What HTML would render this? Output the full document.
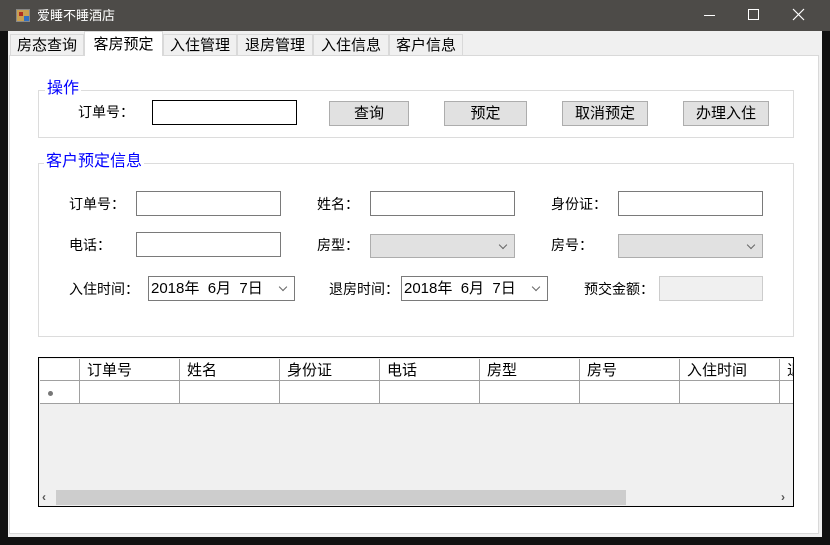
<!DOCTYPE html>
<html><head><meta charset="utf-8"><style>
*{margin:0;padding:0;box-sizing:border-box}
body{width:830px;height:545px;background:#111;position:relative;overflow:hidden;font-family:"Liberation Sans","Noto Sans CJK SC","WenQuanYi Zen Hei",sans-serif;font-size:14px;color:#000}
.a{position:absolute}
.lbl{position:absolute;font-size:14px;line-height:16px;white-space:nowrap}
.tb{position:absolute;background:#fff;border:1px solid #7a7a7a;height:25px}
.cb{position:absolute;background:#e1e1e1;border:1px solid #adadad;height:24px}
.cb:after,.dt:after{content:"";position:absolute;right:8px;top:7px;width:5px;height:5px;border-right:1px solid #666;border-bottom:1px solid #666;transform:rotate(45deg)}
.dt{position:absolute;background:#fff;border:1px solid #7a7a7a;height:25px;font-size:15px;line-height:24px;padding-left:2px}
.btn{position:absolute;background:#e1e1e1;border:1px solid #adadad;height:25px;text-align:center;font-size:15px;line-height:24px}
.grp{position:absolute;border:1px solid #dcdcdc}
.leg{position:absolute;background:#fff;color:#0000ff;font-size:16px;line-height:18px;padding:0 2px}
.tab{position:absolute;top:34px;height:22px;border:1px solid #d9d9d9;background:#f0f0f0;font-size:15px;line-height:22px;text-align:center}
.th{position:absolute;top:359px;height:22px;border-right:1px solid #a0a0a0;border-bottom:1px solid #a0a0a0;background:#fff;font-size:15px;line-height:23px;padding-left:7px;overflow:hidden;white-space:nowrap}
.td{position:absolute;top:381px;height:23px;border-right:1px solid #a0a0a0;border-bottom:1px solid #a0a0a0;background:#fff}
</style></head><body>
<div class="a" style="left:0;top:0;width:830px;height:31px;background:#4d4b48"></div>
<div class="a" style="left:16px;top:9px;width:14px;height:13px;background:#c9a050;border:1px solid #888"></div>
<div class="a" style="left:19px;top:12px;width:4px;height:4px;background:#b03020"></div>
<div class="a" style="left:24px;top:16px;width:5px;height:5px;background:#3070c0"></div>
<div class="lbl" style="left:37px;top:8px;color:#fff;font-size:13px">爱睡不睡酒店</div>
<div class="a" style="left:704px;top:15px;width:11px;height:1px;background:#fff"></div>
<div class="a" style="left:748px;top:9px;width:11px;height:11px;border:1px solid #fff"></div>
<svg class="a" style="left:792px;top:8px" width="13" height="13"><path d="M1 1L12 12M12 1L1 12" stroke="#fff" stroke-width="1.2"/></svg>
<div class="a" style="left:8px;top:31px;width:814px;height:506px;background:#f0f0f0"></div>
<div class="a" style="left:9px;top:55px;width:810px;height:479px;background:#fff;border:1px solid #d9d9d9"></div>
<div class="tab" style="left:10px;width:74px">房态查询</div>
<div class="tab" style="left:84px;top:31px;height:25px;width:79px;background:#fff;border-bottom:none;line-height:25px">客房预定</div>
<div class="tab" style="left:163px;width:74px">入住管理</div>
<div class="tab" style="left:237px;width:76px">退房管理</div>
<div class="tab" style="left:313px;width:76px">入住信息</div>
<div class="tab" style="left:389px;width:74px">客户信息</div>

<div class="grp" style="left:38px;top:90px;width:756px;height:48px"></div>
<div class="leg" style="left:45px;top:80px">操作</div>
<div class="lbl" style="left:78px;top:104px">订单号：</div>
<div class="tb" style="left:152px;top:100px;width:145px;border-color:#000"></div>
<div class="btn" style="left:329px;top:101px;width:80px">查询</div>
<div class="btn" style="left:444px;top:101px;width:83px">预定</div>
<div class="btn" style="left:562px;top:101px;width:86px">取消预定</div>
<div class="btn" style="left:683px;top:101px;width:86px">办理入住</div>

<div class="grp" style="left:38px;top:163px;width:756px;height:174px"></div>
<div class="leg" style="left:44px;top:153px">客户预定信息</div>
<div class="lbl" style="left:69px;top:196px">订单号：</div>
<div class="tb" style="left:136px;top:191px;width:145px"></div>
<div class="lbl" style="left:317px;top:196px">姓名：</div>
<div class="tb" style="left:370px;top:191px;width:145px"></div>
<div class="lbl" style="left:551px;top:196px">身份证：</div>
<div class="tb" style="left:618px;top:191px;width:145px"></div>
<div class="lbl" style="left:69px;top:237px">电话：</div>
<div class="tb" style="left:136px;top:232px;width:145px"></div>
<div class="lbl" style="left:317px;top:237px">房型：</div>
<div class="cb" style="left:370px;top:234px;width:145px"></div>
<div class="lbl" style="left:551px;top:237px">房号：</div>
<div class="cb" style="left:618px;top:234px;width:145px"></div>
<div class="lbl" style="left:69px;top:281px">入住时间：</div>
<div class="dt" style="left:148px;top:276px;width:147px">2018年&nbsp; 6月&nbsp; 7日</div>
<div class="lbl" style="left:329px;top:281px">退房时间：</div>
<div class="dt" style="left:401px;top:276px;width:147px">2018年&nbsp; 6月&nbsp; 7日</div>
<div class="lbl" style="left:584px;top:281px">预交金额：</div>
<div class="a" style="left:659px;top:276px;width:104px;height:25px;background:#f0f0f0;border:1px solid #ccc"></div>

<div class="a" style="left:38px;top:357px;width:756px;height:150px;border:1px solid #000;background:#f0f0f0;overflow:hidden"></div>
<div class="th" style="left:40px;width:40px"></div>
<div class="th" style="left:80px;width:100px">订单号</div>
<div class="th" style="left:180px;width:100px">姓名</div>
<div class="th" style="left:280px;width:100px">身份证</div>
<div class="th" style="left:380px;width:100px">电话</div>
<div class="th" style="left:480px;width:100px">房型</div>
<div class="th" style="left:580px;width:100px">房号</div>
<div class="th" style="left:680px;width:100px">入住时间</div>
<div class="th" style="left:780px;width:13px;border-right:none">退</div>
<div class="td" style="left:40px;width:40px"></div>
<div class="a" style="left:48px;top:391px;width:5px;height:5px;border-radius:50%;background:#777"></div>
<div class="td" style="left:80px;width:100px"></div>
<div class="td" style="left:180px;width:100px"></div>
<div class="td" style="left:280px;width:100px"></div>
<div class="td" style="left:380px;width:100px"></div>
<div class="td" style="left:480px;width:100px"></div>
<div class="td" style="left:580px;width:100px"></div>
<div class="td" style="left:680px;width:100px"></div>
<div class="td" style="left:780px;width:13px;border-right:none"></div>
<div class="a" style="left:39px;top:489px;width:754px;height:17px;background:#f0f0f0"></div>
<div class="a" style="left:56px;top:490px;width:570px;height:15px;background:#cdcdcd"></div>
<div class="lbl" style="left:42px;top:489px;font-size:12px;color:#555;font-weight:bold">&lsaquo;</div>
<div class="lbl" style="left:781px;top:489px;font-size:12px;color:#555;font-weight:bold">&rsaquo;</div>
</body></html>
